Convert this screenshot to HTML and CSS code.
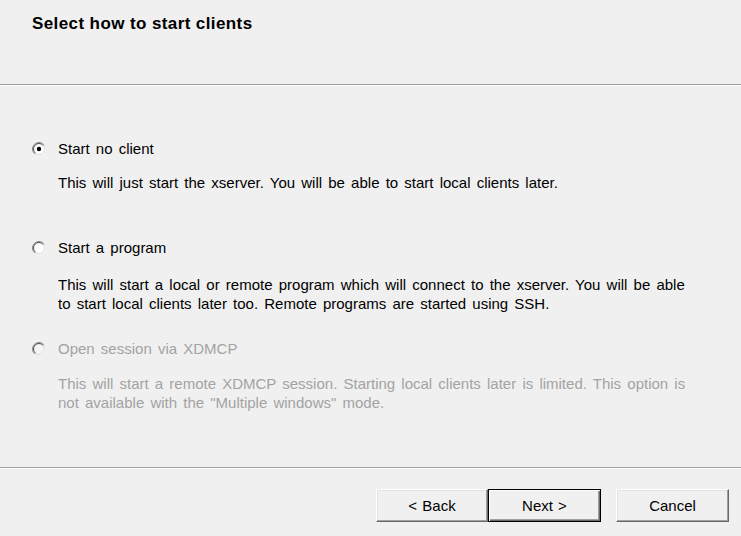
FILE: index.html
```html
<!DOCTYPE html>
<html lang="en">
<head>
<meta charset="utf-8">
<title>Select how to start clients</title>
<link rel="stylesheet" href="styles.css">
</head>
<body>
<div class="dialog">
  <header class="header">
    <h1 class="title">Select how to start clients</h1>
  </header>
  <div class="sep"></div>
  <main class="content">
    <div class="option opt-1">
      <label class="radio-row">
        <svg class="radio" width="14" height="14" viewBox="0 0 14 14" aria-hidden="true">
          <defs>
            <linearGradient id="g-outer" x1="0" y1="0" x2="1" y2="1">
              <stop offset="0" stop-color="#808080"/><stop offset="0.48" stop-color="#8c8c8c"/><stop offset="0.58" stop-color="#e8e8e8"/><stop offset="1" stop-color="#ffffff"/>
            </linearGradient>
            <linearGradient id="g-inner" x1="0" y1="0" x2="1" y2="1">
              <stop offset="0" stop-color="#3c3c3c"/><stop offset="0.48" stop-color="#5a5a5a"/><stop offset="0.58" stop-color="#dadada"/><stop offset="1" stop-color="#e3e3e3"/>
            </linearGradient>
          </defs>
          <circle cx="7" cy="7" r="6.5" fill="none" stroke="url(#g-outer)" stroke-width="1"/>
          <circle cx="7" cy="7" r="5.5" fill="#ffffff" stroke="url(#g-inner)" stroke-width="1"/>
          <circle cx="7" cy="7" r="2.2" fill="#000000"/>
        </svg>
        <span class="label">Start no client</span>
      </label>
      <p class="desc desc-1">This will just start the xserver. You will be able to start local clients later.</p>
    </div>
    <div class="option opt-2">
      <label class="radio-row">
        <svg class="radio" width="14" height="14" viewBox="0 0 14 14" aria-hidden="true">
          <circle cx="7" cy="7" r="6.5" fill="none" stroke="url(#g-outer)" stroke-width="1"/>
          <circle cx="7" cy="7" r="5.5" fill="#ffffff" stroke="url(#g-inner)" stroke-width="1"/>
        </svg>
        <span class="label">Start a program</span>
      </label>
      <p class="desc desc-2">This will start a local or remote program which will connect to the xserver. You will be able<br>to start local clients later too. Remote programs are started using SSH.</p>
    </div>
    <div class="option opt-3 disabled">
      <label class="radio-row">
        <svg class="radio" width="14" height="14" viewBox="0 0 14 14" aria-hidden="true">
          <circle cx="7" cy="7" r="6.5" fill="none" stroke="url(#g-outer)" stroke-width="1"/>
          <circle cx="7" cy="7" r="5.5" fill="#f4f4f4" stroke="url(#g-inner)" stroke-width="1"/>
        </svg>
        <span class="label">Open session via XDMCP</span>
      </label>
      <p class="desc desc-3">This will start a remote XDMCP session. Starting local clients later is limited. This option is<br>not available with the "Multiple windows" mode.</p>
    </div>
  </main>
  <div class="sep"></div>
  <footer class="footer">
    <div class="btn-pair">
      <button class="btn" type="button">&lt; Back</button>
      <button class="btn btn-default" type="button">Next &gt;</button>
    </div>
    <button class="btn" type="button">Cancel</button>
  </footer>
</div>
</body>
</html>
```
FILE: styles.css
```css
html, body {
  margin: 0;
  padding: 0;
  background: #f0f0f0;
}

body {
  font-family: "Liberation Sans", Arial, sans-serif;
  font-size: 15px;
  line-height: 19px;
  color: #000;
}

.dialog {
  width: 741px;
  height: 536px;
  display: flex;
  flex-direction: column;
  overflow: hidden;
}

.header {
  height: 84px;
  box-sizing: border-box;
  padding: 14px 0 0 32px;
}

.title {
  margin: 0;
  font-size: 17px;
  font-weight: bold;
  line-height: 19px;
  letter-spacing: 0.4px;
}

.sep {
  height: 0;
  border-top: 1px solid #a0a0a0;
  border-bottom: 1px solid #ffffff;
}

.content {
  flex: 1;
  padding-left: 32px;
}

.radio-row {
  display: flex;
  align-items: center;
  gap: 12px;
  height: 19px;
}

.radio {
  flex: none;
  display: block;
}

.label {
  display: block;
  word-spacing: 2px;
}

.desc {
  margin: 0;
  padding-left: 26px;
  word-spacing: 2px;
}

.opt-1 { margin-top: 53px; }
.desc-1 { margin-top: 15px; }
.opt-2 { margin-top: 46px; }
.desc-2 { margin-top: 18px; }
.opt-3 { margin-top: 26px; }
.desc-3 { margin-top: 16px; }

.disabled {
  color: #a3a3a3;
}

.footer {
  height: 67px;
  box-sizing: border-box;
  padding: 20px 12px 14px 0;
  display: flex;
  justify-content: flex-end;
  align-items: flex-start;
  gap: 15px;
}

.btn-pair {
  display: flex;
}

.btn {
  width: 113px;
  height: 33px;
  box-sizing: border-box;
  margin: 0;
  padding: 0;
  font-family: "Liberation Sans", Arial, sans-serif;
  font-size: 15px;
  color: #000;
  background: #f0f0f0;
  border: 1px solid;
  border-color: #ffffff #696969 #696969 #ffffff;
  box-shadow: inset -1px -1px 0 #a0a0a0, inset 1px 1px 0 #e3e3e3;
  word-spacing: 1px;
}

.btn-pair .btn:first-child {
  width: 112px;
}

.btn-default {
  border: 1px solid #000000;
  box-shadow: inset 1px 1px 0 #ffffff, inset -1px -1px 0 #696969, inset -2px -2px 0 #a0a0a0;
}
```
